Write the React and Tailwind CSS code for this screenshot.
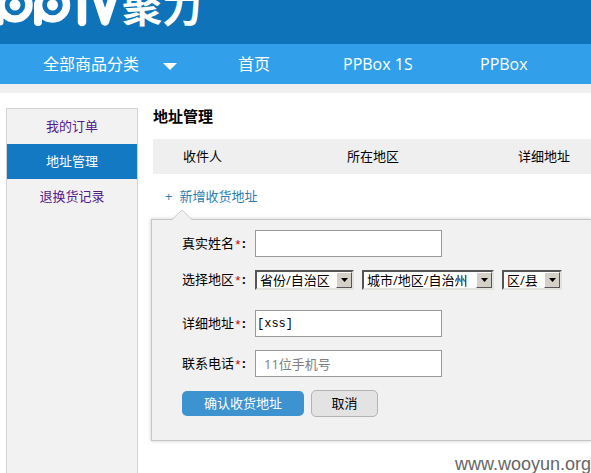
import React from "react";

const MENU = [
  { label: "我的订单", active: false },
  { label: "地址管理", active: true },
  { label: "退换货记录", active: false },
];

function Logo() {
  return (
    <a href="#" aria-label="PPTV 聚力" className="flex h-11 items-end text-white">
      <svg width="122" height="44" viewBox="0 0 122 44" fill="none" stroke="white" strokeLinecap="round" aria-hidden="true">
        <path d="M0 4V22" strokeWidth="7" />
        <circle cx="15" cy="5" r="14" strokeWidth="7.500" />
        <circle cx="15" cy="5" r="5.500" fill="white" stroke="none" />
        <path d="M38 4V22" strokeWidth="8" />
        <circle cx="52.500" cy="5" r="14" strokeWidth="7.500" />
        <circle cx="52.500" cy="5" r="5.500" fill="white" stroke="none" />
        <path d="M82 -6V22" strokeWidth="8.500" />
        <path d="M95 -9L105 21.500L115 -9" strokeWidth="8.500" strokeLinejoin="round" />
      </svg>
      <span className="mb-[15px] text-[40px] leading-[44px] font-bold">聚力</span>
    </a>
  );
}

function Header() {
  return (
    <header>
      <div className="h-11 bg-[#0e73b9]">
        <Logo />
      </div>
      <nav className="flex h-10 items-center bg-[#319fea] text-base whitespace-nowrap text-white">
        <a href="#" className="ml-[43px] flex w-[195px] items-center gap-6">
          全部商品分类
          <svg width="14" height="7" viewBox="0 0 14 7" className="mt-1" fill="white" aria-hidden="true">
            <path d="M0 0H14L7 7Z" />
          </svg>
        </a>
        <a href="#" className="w-[105px]">首页</a>
        <a href="#" className="w-[137px]">PPBox 1S</a>
        <a href="#">PPBox</a>
      </nav>
      <div className="h-[9px] bg-[#efefef]" />
    </header>
  );
}

function Sidebar() {
  return (
    <aside className="w-[132px] shrink-0 border border-b-0 border-[#d3d3d3] bg-[#f2f2f2] text-center">
      {MENU.map((item) => (
        <a
          key={item.label}
          href="#"
          className={item.active ? "block h-[35px] bg-[#1279c2] leading-[35px] text-white" : "block h-[35px] leading-[35px] text-[#551a8b]"}
        >
          {item.label}
        </a>
      ))}
    </aside>
  );
}

function Label({ htmlFor, children }) {
  return (
    <label htmlFor={htmlFor} className="flex w-[73px] shrink-0 items-center">
      {children}
      <span className="w-2 pt-1 text-center font-[Liberation_Mono] text-[#c00]">*</span>
      <span className="font-bold">:</span>
    </label>
  );
}

function Select({ id, label, text, width }) {
  return (
    <span className={"relative flex h-5 " + width}>
      <select
        id={id}
        aria-label={label}
        className="h-5 w-full appearance-none border-2 border-t-[#555] border-r-[#e4e2de] border-b-[#e4e2de] border-l-[#555] bg-white pl-[3px] text-[13px] leading-4"
      >
        <option>{text}</option>
      </select>
      <span className="pointer-events-none absolute top-0.5 right-0.5 flex h-4 w-4 items-center justify-center border border-t-white border-r-[#555] border-b-[#555] border-l-white bg-[#d4d0c8]">
        <svg width="7" height="4" viewBox="0 0 7 4" aria-hidden="true">
          <path d="M0 0H7L3.500 4Z" />
        </svg>
      </span>
    </span>
  );
}

const INPUT = "h-[27px] w-[187px] border border-[#999] bg-white";

function AddressForm() {
  return (
    <form className="relative mt-3 -ml-0.5 h-[222px] border border-r-0 border-[#c6c6c6] bg-[#f1f1f1] pt-[10px] pl-[30px] shadow-[0_0_4px_rgba(0,0,0,0.2)]">
      <svg className="absolute -top-[11px] left-5" width="22" height="12" viewBox="0 0 22 12" aria-hidden="true">
        <path d="M0 11L10 1L20 11V12H0Z" fill="#f1f1f1" />
        <path d="M0 10.500L10 1L20 10.500" fill="none" stroke="#ccc" />
      </svg>
      <div className="flex h-[27px] items-center">
        <Label htmlFor="name">真实姓名</Label>
        <input id="name" className={INPUT} />
      </div>
      <div className="mt-[13px] flex h-5 items-center">
        <Label htmlFor="province">选择地区</Label>
        <div className="flex gap-2">
          <Select id="province" label="省份" text="省份/自治区" width="w-[99px]" />
          <Select id="city" label="城市" text="城市/地区/自治州" width="w-[132px]" />
          <Select id="district" label="区县" text="区/县" width="w-[60px]" />
        </div>
      </div>
      <div className="mt-5 flex h-[27px] items-center">
        <Label htmlFor="address">详细地址</Label>
        <input id="address" defaultValue="[xss]" className={INPUT + " pl-px font-[Liberation_Mono] text-[12px]"} />
      </div>
      <div className="mt-[13px] flex h-[27px] items-center">
        <Label htmlFor="phone">联系电话</Label>
        <input id="phone" placeholder="11位手机号" className={INPUT + " pl-2 placeholder:text-[#808080]"} />
      </div>
      <div className="mt-[13px] flex items-center gap-[7px]">
        <button type="button" className="h-[25px] w-[122px] rounded-[5px] bg-[#3d92d0] text-white">确认收货地址</button>
        <button type="button" className="h-[27px] w-[67px] rounded-[5px] border border-[#b3b3b3] bg-[#e3e3e3]">取消</button>
      </div>
    </form>
  );
}

export default function App() {
  return (
    <div className="flex h-screen flex-col overflow-hidden bg-white font-['Open_Sans','Noto_Sans_CJK_SC',sans-serif] text-[13px] text-black">
      <Header />
      <div className="flex min-h-0 flex-1 pt-[15px] pl-1.5">
        <Sidebar />
        <main className="ml-[15px] min-w-0 flex-1">
          <h1 className="h-[31px] text-[15px] leading-4 font-bold">地址管理</h1>
          <table className="w-full table-fixed bg-[#efefef] text-left whitespace-nowrap">
            <thead>
              <tr className="h-[35px]">
                <th className="w-[194px] pl-[30px] font-normal">收件人</th>
                <th className="w-[171px] font-normal">所在地区</th>
                <th className="font-normal">详细地址</th>
              </tr>
            </thead>
          </table>
          <a href="#" className="mt-[13px] ml-3 flex h-5 items-center gap-[7px] text-[#2c7daf]">
            <span>+</span>
            <span>新增收货地址</span>
          </a>
          <AddressForm />
          <footer className="mt-[11px] text-right font-[Liberation_Sans] text-[18px] leading-6 text-[#666]">www.wooyun.org</footer>
        </main>
      </div>
    </div>
  );
}
